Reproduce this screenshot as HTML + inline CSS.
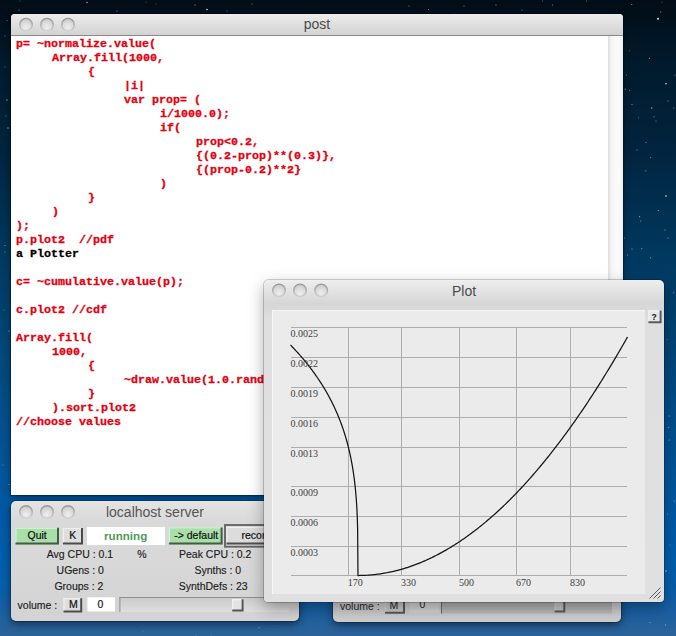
<!DOCTYPE html>
<html><head><meta charset="utf-8">
<style>
*{margin:0;padding:0;box-sizing:border-box}
html,body{width:676px;height:636px;overflow:hidden}
body{position:relative;font-family:"Liberation Sans",sans-serif;
background:linear-gradient(180deg,#020c16 0%,#011a2c 10%,#02243f 24%,#00385e 40%,#034577 54%,#03559a 75%,#0058a4 80%,#005ead 88%,#0a5eaa 93%,#2e6298 100%);}
.w{position:absolute;overflow:hidden}
.w svg{position:absolute}
svg text{white-space:pre}
</style></head><body>
<svg width="0" height="0" style="position:absolute">
 <defs>
  <radialGradient id="tlg" cx="50%" cy="72%" r="62%">
   <stop offset="0" stop-color="#eeeeee"/><stop offset="0.6" stop-color="#dddddd"/><stop offset="1" stop-color="#cbcbcb"/>
  </radialGradient>
  <linearGradient id="tls" x1="0" y1="0" x2="0" y2="1">
   <stop offset="0" stop-color="#999"/><stop offset="0.45" stop-color="#adadad"/><stop offset="1" stop-color="#d2d2d2"/>
  </linearGradient>
  <linearGradient id="tbar" x1="0" y1="0" x2="0" y2="1">
   <stop offset="0" stop-color="#ececec"/><stop offset="1" stop-color="#d3d3d3"/>
  </linearGradient>
 </defs>
</svg>
<svg style="position:absolute;left:0;top:0" width="676" height="636"><circle cx="20" cy="1" r="0.5" fill="#d8e8f8" opacity="0.5"/><circle cx="19" cy="10" r="0.6" fill="#d8e8f8" opacity="0.7"/><circle cx="87" cy="2.5" r="0.7" fill="#d8e8f8" opacity="0.8"/><circle cx="117" cy="11" r="0.6" fill="#d8e8f8" opacity="0.6"/><circle cx="146" cy="2" r="0.5" fill="#d8e8f8" opacity="0.4"/><circle cx="156" cy="4" r="0.5" fill="#d8e8f8" opacity="0.4"/><circle cx="195" cy="5" r="0.6" fill="#d8e8f8" opacity="0.7"/><circle cx="207" cy="9.5" r="0.8" fill="#d8e8f8" opacity="1"/><circle cx="227" cy="11" r="0.5" fill="#d8e8f8" opacity="0.6"/><circle cx="252" cy="4" r="0.6" fill="#d8e8f8" opacity="0.6"/><circle cx="409" cy="6" r="0.6" fill="#d8e8f8" opacity="0.6"/><circle cx="428.5" cy="9.5" r="0.6" fill="#d8e8f8" opacity="0.6"/><circle cx="464" cy="6" r="0.6" fill="#d8e8f8" opacity="0.6"/><circle cx="496" cy="5" r="0.6" fill="#d8e8f8" opacity="0.7"/><circle cx="454" cy="14" r="0.5" fill="#d8e8f8" opacity="0.5"/><circle cx="522" cy="10" r="0.6" fill="#d8e8f8" opacity="0.6"/><circle cx="542.5" cy="1" r="0.5" fill="#d8e8f8" opacity="0.5"/><circle cx="552.5" cy="5" r="0.6" fill="#d8e8f8" opacity="0.6"/><circle cx="586.5" cy="1" r="0.5" fill="#d8e8f8" opacity="0.5"/><circle cx="631.8" cy="4.5" r="0.6" fill="#d8e8f8" opacity="0.6"/><circle cx="662" cy="2" r="0.5" fill="#d8e8f8" opacity="0.5"/><circle cx="660.7" cy="12" r="0.6" fill="#d8e8f8" opacity="0.7"/><circle cx="658" cy="18.7" r="1" fill="#d8e8f8" opacity="1"/><circle cx="649.5" cy="58.4" r="0.6" fill="#d8e8f8" opacity="0.5"/><circle cx="629.7" cy="50.7" r="0.5" fill="#d8e8f8" opacity="0.4"/><circle cx="626.4" cy="75" r="0.6" fill="#d8e8f8" opacity="0.5"/><circle cx="674.9" cy="75" r="0.6" fill="#d8e8f8" opacity="0.5"/><circle cx="666" cy="83.7" r="0.8" fill="#d8e8f8" opacity="0.9"/><circle cx="625.3" cy="89.2" r="0.6" fill="#d8e8f8" opacity="0.6"/><circle cx="629.7" cy="90.3" r="0.6" fill="#d8e8f8" opacity="0.5"/><circle cx="632" cy="104.6" r="0.6" fill="#d8e8f8" opacity="0.6"/><circle cx="651.7" cy="108" r="0.7" fill="#d8e8f8" opacity="0.7"/><circle cx="668" cy="101" r="0.6" fill="#d8e8f8" opacity="0.6"/><circle cx="673.8" cy="108" r="0.6" fill="#d8e8f8" opacity="0.6"/><circle cx="654" cy="116.7" r="0.6" fill="#d8e8f8" opacity="0.5"/><circle cx="656" cy="121" r="0.6" fill="#d8e8f8" opacity="0.6"/><circle cx="638.5" cy="117.8" r="0.5" fill="#d8e8f8" opacity="0.5"/><circle cx="646" cy="142.6" r="0.6" fill="#d8e8f8" opacity="0.6"/><circle cx="637" cy="150" r="0.6" fill="#d8e8f8" opacity="0.6"/><circle cx="650.6" cy="157.6" r="0.6" fill="#d8e8f8" opacity="0.5"/><circle cx="645.8" cy="170.8" r="0.6" fill="#d8e8f8" opacity="0.5"/><circle cx="666" cy="196" r="0.8" fill="#d8e8f8" opacity="1"/><circle cx="658.3" cy="210.5" r="0.6" fill="#d8e8f8" opacity="0.7"/><circle cx="639.6" cy="216.7" r="0.6" fill="#d8e8f8" opacity="0.6"/><circle cx="640.7" cy="221" r="0.6" fill="#d8e8f8" opacity="0.6"/><circle cx="665" cy="230" r="0.6" fill="#d8e8f8" opacity="0.7"/><circle cx="668" cy="238" r="0.6" fill="#d8e8f8" opacity="0.6"/><circle cx="624.6" cy="238" r="0.5" fill="#d8e8f8" opacity="0.5"/><circle cx="632" cy="249" r="0.6" fill="#d8e8f8" opacity="0.7"/><circle cx="641.8" cy="248.6" r="0.6" fill="#d8e8f8" opacity="0.6"/><circle cx="627.5" cy="255" r="0.6" fill="#d8e8f8" opacity="0.6"/><circle cx="650.6" cy="257.8" r="0.6" fill="#d8e8f8" opacity="0.6"/><circle cx="673.6" cy="292.7" r="0.6" fill="#d8e8f8" opacity="0.5"/><circle cx="667.3" cy="339.5" r="0.5" fill="#d8e8f8" opacity="0.4"/><circle cx="669.3" cy="416" r="0.6" fill="#d8e8f8" opacity="0.7"/><circle cx="668.7" cy="427.3" r="0.6" fill="#d8e8f8" opacity="0.6"/><circle cx="669.3" cy="440" r="0.6" fill="#d8e8f8" opacity="0.6"/><circle cx="674.4" cy="501" r="0.6" fill="#d8e8f8" opacity="0.6"/><circle cx="667.3" cy="514" r="0.5" fill="#d8e8f8" opacity="0.5"/><circle cx="670" cy="545" r="0.5" fill="#d8e8f8" opacity="0.5"/><circle cx="666" cy="571" r="0.8" fill="#d8e8f8" opacity="0.8"/><circle cx="7" cy="20.6" r="0.6" fill="#d8e8f8" opacity="0.5"/><circle cx="5" cy="36" r="0.6" fill="#d8e8f8" opacity="0.5"/><circle cx="5" cy="67" r="0.6" fill="#d8e8f8" opacity="0.5"/><circle cx="7" cy="100" r="0.7" fill="#d8e8f8" opacity="0.7"/><circle cx="6" cy="116" r="0.6" fill="#d8e8f8" opacity="0.5"/><circle cx="8" cy="128" r="0.7" fill="#d8e8f8" opacity="0.7"/><circle cx="5" cy="245.5" r="0.6" fill="#d8e8f8" opacity="0.6"/><circle cx="5" cy="252" r="0.6" fill="#d8e8f8" opacity="0.5"/><circle cx="4" cy="310" r="0.5" fill="#d8e8f8" opacity="0.4"/><circle cx="9" cy="331" r="0.6" fill="#d8e8f8" opacity="0.8"/><circle cx="3" cy="465" r="0.6" fill="#d8e8f8" opacity="0.5"/><circle cx="9" cy="484.5" r="0.6" fill="#d8e8f8" opacity="0.6"/><circle cx="143" cy="631" r="0.5" fill="#d8e8f8" opacity="0.4"/><circle cx="196" cy="635" r="0.5" fill="#d8e8f8" opacity="0.4"/><circle cx="211" cy="635" r="0.5" fill="#d8e8f8" opacity="0.4"/><circle cx="259" cy="627.7" r="0.6" fill="#d8e8f8" opacity="0.5"/><circle cx="650" cy="622.6" r="0.6" fill="#d8e8f8" opacity="0.6"/><circle cx="665.5" cy="625" r="0.6" fill="#d8e8f8" opacity="0.6"/></svg>

<!-- POST WINDOW -->
<div class="w" style="left:11px;top:14px;width:612px;height:481px;border-radius:4px 4px 0 0;background:#fff;box-shadow:0 0 0 1px rgba(0,0,0,0.25),0 2px 7px rgba(0,0,0,0.45);overflow:visible"><div style="position:absolute;inset:0;overflow:hidden;border-radius:4px 4px 0 0">
 <svg style="left:-11px;top:-14px" width="676" height="636">
  <rect x="11" y="14" width="612" height="21" fill="url(#tbar)"/>
  <rect x="11" y="35" width="612" height="1" fill="#8a8a8a"/>
  <circle cx="26.0" cy="24.7" r="6.3" fill="url(#tlg)" stroke="url(#tls)" stroke-width="1.4"/><circle cx="47.0" cy="24.7" r="6.3" fill="url(#tlg)" stroke="url(#tls)" stroke-width="1.4"/><circle cx="68.0" cy="24.7" r="6.3" fill="url(#tlg)" stroke="url(#tls)" stroke-width="1.4"/>
  <text x="317" y="29" font-family="Liberation Sans" font-size="14" fill="#4b4b4b" text-anchor="middle">post</text>
  <rect x="608" y="36" width="15" height="459" fill="url(#sbar)"/>
  <defs><linearGradient id="sbar" x1="0" y1="0" x2="1" y2="0"><stop offset="0" stop-color="#dedede"/><stop offset="0.25" stop-color="#f6f6f6"/><stop offset="0.7" stop-color="#fbfbfb"/><stop offset="1" stop-color="#efefef"/></linearGradient></defs>
  <g font-family="Liberation Mono" font-weight="bold" font-size="11.67" stroke-width="0.3">
<text x="16" y="47" fill="#e4000e" stroke="#e4000e">p= ~normalize.value(</text>
<text x="52" y="61" fill="#e4000e" stroke="#e4000e">Array.fill(1000,</text>
<text x="88" y="75" fill="#e4000e" stroke="#e4000e">{</text>
<text x="124" y="89" fill="#e4000e" stroke="#e4000e">|i|</text>
<text x="124" y="103" fill="#e4000e" stroke="#e4000e">var prop= (</text>
<text x="160" y="117" fill="#e4000e" stroke="#e4000e">i/1000.0);</text>
<text x="160" y="131" fill="#e4000e" stroke="#e4000e">if(</text>
<text x="196" y="145" fill="#e4000e" stroke="#e4000e">prop&lt;0.2,</text>
<text x="196" y="159" fill="#e4000e" stroke="#e4000e">{(0.2-prop)**(0.3)},</text>
<text x="196" y="173" fill="#e4000e" stroke="#e4000e">{(prop-0.2)**2}</text>
<text x="160" y="187" fill="#e4000e" stroke="#e4000e">)</text>
<text x="88" y="201" fill="#e4000e" stroke="#e4000e">}</text>
<text x="52" y="215" fill="#e4000e" stroke="#e4000e">)</text>
<text x="16" y="229" fill="#e4000e" stroke="#e4000e">);</text>
<text x="16" y="243" fill="#e4000e" stroke="#e4000e">p.plot2  //pdf</text>
<text x="16" y="257" fill="#000" stroke="#000">a Plotter</text>
<text x="16" y="285" fill="#e4000e" stroke="#e4000e">c= ~cumulative.value(p);</text>
<text x="16" y="313" fill="#e4000e" stroke="#e4000e">c.plot2 //cdf</text>
<text x="16" y="341" fill="#e4000e" stroke="#e4000e">Array.fill(</text>
<text x="52" y="355" fill="#e4000e" stroke="#e4000e">1000,</text>
<text x="88" y="369" fill="#e4000e" stroke="#e4000e">{</text>
<text x="124" y="383" fill="#e4000e" stroke="#e4000e">~draw.value(1.0.rand</text>
<text x="88" y="397" fill="#e4000e" stroke="#e4000e">}</text>
<text x="52" y="411" fill="#e4000e" stroke="#e4000e">).sort.plot2</text>
<text x="16" y="425" fill="#e4000e" stroke="#e4000e">//choose values</text>
  </g>
 </svg>
</div></div>

<!-- INTERNAL SERVER WINDOW -->
<div class="w" style="left:333px;top:500px;width:288px;height:121.5px;border-radius:0 0 5px 5px;background:linear-gradient(#d4d4d4,#cdcdcd);box-shadow:0 0 0 1px rgba(0,0,0,0.2),0 3px 9px rgba(0,0,0,0.5)">
 <svg style="left:-333px;top:-500px" width="676" height="636">
  <g font-family="Liberation Sans" font-size="10.5" fill="#262626">
   <text x="340" y="610">volume :</text>
  </g>
  <rect x="385" y="598" width="20" height="15.7" fill="#cbcbcb"/><path d="M385,598.5H405M385.5,598V613.7" stroke="#dadada" stroke-width="1"/><path d="M385,612.7H404V598" stroke="#5a5a5a" stroke-width="2" fill="none"/>
  <text x="389.6" y="608.5" font-family="Liberation Sans" font-size="10.5" fill="#1a1a1a">M</text>
  <rect x="409.6" y="598" width="29.6" height="14.6" fill="#d6d6d6"/>
  <text x="419.5" y="608" font-family="Liberation Sans" font-size="10.5" fill="#262626">0</text>
  <rect x="441" y="598" width="171" height="15.6" fill="url(#trk2)"/>
  <defs><linearGradient id="trk2" x1="0" y1="0" x2="0" y2="1"><stop offset="0" stop-color="#a9a9a9"/><stop offset="1" stop-color="#bebebe"/></linearGradient></defs>
  <rect x="441" y="598" width="1" height="15.6" fill="#6f6f6f"/>
  <rect x="554.6" y="599" width="10.7" height="13.6" fill="#c6c6c6"/><path d="M554.6,599.5H565.3M555.1,599V612.6" stroke="#d2d2d2" stroke-width="1"/><path d="M554.6,611.6H564.3V599" stroke="#5a5a5a" stroke-width="2" fill="none"/>
 </svg>
</div>

<!-- LOCALHOST SERVER WINDOW -->
<div class="w" style="left:11px;top:501px;width:288px;height:119.6px;border-radius:5px;background:linear-gradient(#e4e4e4,#d9d9d9 21px,#d8d8d8 60px,#d3d3d3);box-shadow:0 0 0 1px rgba(0,0,0,0.2),0 3px 9px rgba(0,0,0,0.5)">
 <svg style="left:-11px;top:-501px" width="676" height="636">
  <circle cx="26.0" cy="512.0" r="6.3" fill="url(#tlg)" stroke="url(#tls)" stroke-width="1.4"/><circle cx="47.0" cy="512.0" r="6.3" fill="url(#tlg)" stroke="url(#tls)" stroke-width="1.4"/><circle cx="68.0" cy="512.0" r="6.3" fill="url(#tlg)" stroke="url(#tls)" stroke-width="1.4"/>
  <text x="155" y="517" font-family="Liberation Sans" font-size="14" fill="#555" text-anchor="middle">localhost server</text>
  <rect x="15.5" y="527.8" width="43.5" height="16.8" fill="#a9dfa9"/><path d="M15.5,528.3H59M16,527.8V544.6" stroke="#d6f4d6" stroke-width="1"/><path d="M15.5,543.6H58V527.8" stroke="#435c43" stroke-width="2" fill="none"/>
  <rect x="63" y="528" width="20" height="16.6" fill="#dedede"/><path d="M63,528.5H83M63.5,528V544.6" stroke="#f2f2f2" stroke-width="1"/><path d="M63,543.6H82V528" stroke="#4a4a4a" stroke-width="2" fill="none"/>
  <rect x="87" y="527" width="78" height="18" fill="#fff"/>
  <rect x="169" y="527.4" width="53.6" height="17" fill="#a9dfa9"/><path d="M169,527.9H222.6M169.5,527.4V544.4" stroke="#d6f4d6" stroke-width="1"/><path d="M169,543.4H221.6V527.4" stroke="#435c43" stroke-width="2" fill="none"/>
  <rect x="225" y="525" width="60" height="21.7" fill="none" stroke="#666" stroke-width="1.9"/>
  <rect x="226.5" y="527" width="58.5" height="17.4" fill="#dcdcdc"/><path d="M226.5,527.5H285M227,527V544.4" stroke="#f0f0f0" stroke-width="1"/><path d="M226.5,543.4H284V527" stroke="#4f4f4f" stroke-width="2" fill="none"/>
  <g font-family="Liberation Sans" font-size="10.5" fill="#111" stroke="#111" stroke-width="0.2">
   <text x="27.5" y="538.6">Quit</text>
   <text x="69.2" y="538.6">K</text>
   <text x="174.2" y="539">-&gt; default</text>
   <text x="241.5" y="538.8">record</text>
  </g>
  <text x="125.7" y="540.2" font-family="Liberation Sans" font-weight="bold" font-size="11.6" fill="#4e9a58" text-anchor="middle">running</text>
  <g font-family="Liberation Sans" font-size="10.5" fill="#1c1c1c" stroke="#1c1c1c" stroke-width="0.15">
   <text x="46.8" y="558">Avg CPU : 0.1</text>
   <text x="137.3" y="558">%</text>
   <text x="56.6" y="574">UGens : 0</text>
   <text x="54.4" y="590">Groups : 2</text>
   <text x="179" y="558">Peak CPU : 0.2</text>
   <text x="194.4" y="574">Synths : 0</text>
   <text x="178.7" y="590">SynthDefs : 23</text>
   <text x="17.6" y="609">volume :</text>
  </g>
  <rect x="63.5" y="598.2" width="18.7" height="14.2" fill="#dedede"/><path d="M63.5,598.7H82.2M64,598.2V612.4" stroke="#f2f2f2" stroke-width="1"/><path d="M63.5,611.4H81.2V598.2" stroke="#4a4a4a" stroke-width="2" fill="none"/>
  <text x="69" y="608.2" font-family="Liberation Sans" font-size="10.5" fill="#111" stroke="#111" stroke-width="0.2">M</text>
  <rect x="87.4" y="597.3" width="27.6" height="14.2" fill="#fff"/>
  <text x="97.6" y="607.8" font-family="Liberation Sans" font-size="10.5" fill="#111" stroke="#111" stroke-width="0.2">0</text>
  <rect x="119.4" y="597" width="169.5" height="15" fill="url(#trk)"/>
  <defs><linearGradient id="trk" x1="0" y1="0" x2="0" y2="1"><stop offset="0" stop-color="#cacaca"/><stop offset="1" stop-color="#dedede"/></linearGradient></defs>
  <rect x="119.4" y="597" width="169.5" height="1" fill="#8f8f8f"/>
  <rect x="119.4" y="597" width="1" height="15" fill="#8f8f8f"/>
  <rect x="232.2" y="599.2" width="11.4" height="12.2" fill="#e4e4e4"/><path d="M232.2,599.7H243.6M232.7,599.2V611.4" stroke="#f6f6f6" stroke-width="1"/><path d="M232.2,610.4H242.6V599.2" stroke="#555" stroke-width="2" fill="none"/>
 </svg>
</div>

<!-- PLOT WINDOW -->
<div class="w" style="left:264px;top:280px;width:400px;height:322px;border-radius:5px 5px 4px 4px;background:linear-gradient(#f0f0f0,#ececec 2px,#d6d6d6 24px,#d9d9d9 29px,#dfdfdf 40px,#e0e0e0);box-shadow:0 0 0 1px rgba(0,0,0,0.18),0 6px 16px rgba(0,0,0,0.34)">
 <svg style="left:-264px;top:-280px" width="676" height="636">
  <circle cx="279.0" cy="290.4" r="6.3" fill="url(#tlg)" stroke="url(#tls)" stroke-width="1.4"/><circle cx="300.0" cy="290.4" r="6.3" fill="url(#tlg)" stroke="url(#tls)" stroke-width="1.4"/><circle cx="321.2" cy="290.4" r="6.3" fill="url(#tlg)" stroke="url(#tls)" stroke-width="1.4"/>
  <text x="464" y="296" font-family="Liberation Sans" font-size="14" fill="#4b4b4b" text-anchor="middle">Plot</text>
  <rect x="272" y="310" width="373" height="284" fill="#ebebeb"/><rect x="272" y="310" width="1" height="284" fill="#f6f6f6"/><rect x="272" y="310" width="373" height="1" fill="#f3f3f3"/>
  <rect x="648.4" y="310.4" width="13.2" height="12.9" fill="#e6e6e6"/><path d="M648.4,310.9H661.6M648.9,310.4V323.3" stroke="#f6f6f6" stroke-width="1"/><path d="M648.4,322.3H660.6V310.4" stroke="#5a5a5a" stroke-width="2" fill="none"/>
  <text x="651.6" y="320" font-family="Liberation Sans" font-weight="bold" font-size="8.5" fill="#111">?</text>
  <g stroke="#adadad" stroke-width="1" fill="none" shape-rendering="crispEdges">
   <path d="M290.5,327.5H627M290.5,357.5H627M290.5,387.5H627M290.5,417.5H627M290.5,447.5H627M290.5,486.5H627M290.5,516.5H627M290.5,546.5H627M290.5,575.5H627"/>
   <path d="M348.5,327V576M401.5,327V576M459.5,327V576M516.5,327V576M570.5,327V576"/>
  </g>
  <polyline points="290.50,345.00 290.84,345.34 291.17,345.69 291.51,346.04 291.85,346.39 292.19,346.74 292.52,347.09 292.86,347.45 293.20,347.80 293.54,348.16 293.87,348.52 294.21,348.87 294.55,349.23 294.89,349.60 295.22,349.96 295.56,350.32 295.90,350.69 296.23,351.06 296.57,351.43 296.91,351.80 297.25,352.17 297.58,352.54 297.92,352.91 298.26,353.29 298.60,353.67 298.93,354.05 299.27,354.43 299.61,354.81 299.95,355.19 300.28,355.58 300.62,355.96 300.96,356.35 301.29,356.74 301.63,357.13 301.97,357.53 302.31,357.92 302.64,358.32 302.98,358.72 303.32,359.12 303.66,359.52 303.99,359.92 304.33,360.33 304.67,360.73 305.01,361.14 305.34,361.55 305.68,361.96 306.02,362.38 306.35,362.79 306.69,363.21 307.03,363.63 307.37,364.05 307.70,364.48 308.04,364.90 308.38,365.33 308.72,365.76 309.05,366.19 309.39,366.63 309.73,367.06 310.07,367.50 310.40,367.94 310.74,368.39 311.08,368.83 311.41,369.28 311.75,369.73 312.09,370.18 312.43,370.63 312.76,371.09 313.10,371.55 313.44,372.01 313.78,372.47 314.11,372.94 314.45,373.41 314.79,373.88 315.13,374.35 315.46,374.83 315.80,375.31 316.14,375.79 316.47,376.28 316.81,376.76 317.15,377.25 317.49,377.75 317.82,378.24 318.16,378.74 318.50,379.24 318.84,379.75 319.17,380.25 319.51,380.77 319.85,381.28 320.19,381.80 320.52,382.32 320.86,382.84 321.20,383.37 321.54,383.90 321.87,384.43 322.21,384.97 322.55,385.51 322.88,386.06 323.22,386.60 323.56,387.16 323.90,387.71 324.23,388.27 324.57,388.84 324.91,389.40 325.25,389.98 325.58,390.55 325.92,391.13 326.26,391.72 326.60,392.30 326.93,392.90 327.27,393.50 327.61,394.10 327.94,394.70 328.28,395.32 328.62,395.93 328.96,396.55 329.29,397.18 329.63,397.81 329.97,398.45 330.31,399.09 330.64,399.74 330.98,400.40 331.32,401.05 331.66,401.72 331.99,402.39 332.33,403.07 332.67,403.75 333.00,404.44 333.34,405.14 333.68,405.84 334.02,406.55 334.35,407.27 334.69,408.00 335.03,408.73 335.37,409.47 335.70,410.21 336.04,410.97 336.38,411.73 336.72,412.51 337.05,413.29 337.39,414.08 337.73,414.87 338.06,415.68 338.40,416.50 338.74,417.33 339.08,418.16 339.41,419.01 339.75,419.87 340.09,420.74 340.43,421.62 340.76,422.52 341.10,423.42 341.44,424.34 341.78,425.27 342.11,426.22 342.45,427.18 342.79,428.16 343.12,429.15 343.46,430.15 343.80,431.17 344.14,432.21 344.47,433.27 344.81,434.35 345.15,435.44 345.49,436.56 345.82,437.70 346.16,438.86 346.50,440.04 346.84,441.25 347.17,442.48 347.51,443.74 347.85,445.03 348.18,446.35 348.52,447.70 348.86,449.09 349.20,450.51 349.53,451.98 349.87,453.48 350.21,455.03 350.55,456.62 350.88,458.27 351.22,459.97 351.56,461.74 351.90,463.57 352.23,465.47 352.57,467.45 352.91,469.53 353.24,471.70 353.58,473.98 353.92,476.39 354.26,478.94 354.59,481.66 354.93,484.58 355.27,487.74 355.61,491.19 355.94,495.00 356.28,499.28 356.62,504.22 356.96,510.11 357.29,517.60 357.63,528.47 357.97,575.50 358.64,575.50 359.99,575.49 361.34,575.46 362.69,575.43 364.04,575.38 365.39,575.32 366.74,575.25 368.09,575.16 369.44,575.07 370.79,574.96 372.14,574.84 373.48,574.71 374.83,574.57 376.18,574.41 377.53,574.24 378.88,574.06 380.23,573.87 381.58,573.67 382.93,573.45 384.28,573.23 385.63,572.99 386.98,572.74 388.33,572.47 389.68,572.20 391.03,571.91 392.38,571.61 393.73,571.30 395.07,570.98 396.42,570.65 397.77,570.30 399.12,569.94 400.47,569.57 401.82,569.19 403.17,568.79 404.52,568.39 405.87,567.97 407.22,567.54 408.57,567.09 409.92,566.64 411.27,566.17 412.62,565.70 413.97,565.21 415.31,564.70 416.66,564.19 418.01,563.66 419.36,563.13 420.71,562.58 422.06,562.01 423.41,561.44 424.76,560.85 426.11,560.26 427.46,559.65 428.81,559.03 430.16,558.39 431.51,557.75 432.86,557.09 434.21,556.42 435.56,555.74 436.90,555.04 438.25,554.34 439.60,553.62 440.95,552.89 442.30,552.15 443.65,551.40 445.00,550.63 446.35,549.86 447.70,549.07 449.05,548.27 450.40,547.45 451.75,546.63 453.10,545.79 454.45,544.94 455.80,544.08 457.14,543.21 458.49,542.33 459.84,541.43 461.19,540.52 462.54,539.60 463.89,538.67 465.24,537.72 466.59,536.77 467.94,535.80 469.29,534.82 470.64,533.83 471.99,532.82 473.34,531.81 474.69,530.78 476.04,529.74 477.38,528.69 478.73,527.62 480.08,526.55 481.43,525.46 482.78,524.36 484.13,523.25 485.48,522.12 486.83,520.99 488.18,519.84 489.53,518.68 490.88,517.51 492.23,516.33 493.58,515.13 494.93,513.92 496.28,512.70 497.63,511.47 498.97,510.23 500.32,508.97 501.67,507.71 503.02,506.43 504.37,505.14 505.72,503.83 507.07,502.52 508.42,501.19 509.77,499.85 511.12,498.50 512.47,497.14 513.82,495.76 515.17,494.38 516.52,492.98 517.87,491.57 519.21,490.15 520.56,488.71 521.91,487.26 523.26,485.81 524.61,484.34 525.96,482.85 527.31,481.36 528.66,479.85 530.01,478.33 531.36,476.80 532.71,475.26 534.06,473.71 535.41,472.14 536.76,470.56 538.11,468.97 539.45,467.37 540.80,465.76 542.15,464.13 543.50,462.50 544.85,460.85 546.20,459.18 547.55,457.51 548.90,455.82 550.25,454.13 551.60,452.42 552.95,450.70 554.30,448.96 555.65,447.22 557.00,445.46 558.35,443.69 559.70,441.91 561.04,440.12 562.39,438.31 563.74,436.49 565.09,434.67 566.44,432.83 567.79,430.97 569.14,429.11 570.49,427.23 571.84,425.34 573.19,423.44 574.54,421.53 575.89,419.60 577.24,417.67 578.59,415.72 579.94,413.76 581.28,411.79 582.63,409.80 583.98,407.80 585.33,405.80 586.68,403.78 588.03,401.74 589.38,399.70 590.73,397.64 592.08,395.58 593.43,393.50 594.78,391.40 596.13,389.30 597.48,387.18 598.83,385.06 600.18,382.92 601.53,380.76 602.87,378.60 604.22,376.43 605.57,374.24 606.92,372.04 608.27,369.83 609.62,367.60 610.97,365.37 612.32,363.12 613.67,360.86 615.02,358.59 616.37,356.31 617.72,354.01 619.07,351.70 620.42,349.38 621.77,347.05 623.11,344.71 624.46,342.36 625.81,339.99 627.16,337.61 627.50,337.01" fill="none" stroke="#151515" stroke-width="1.25" stroke-linejoin="round"/>
  <g font-family="Liberation Serif" font-size="10" fill="#404040">
   <text x="290.5" y="336.5">0.0025</text>
   <text x="290.5" y="366.5">0.0022</text>
   <text x="290.5" y="396.5">0.0019</text>
   <text x="290.5" y="426.5">0.0016</text>
   <text x="290.5" y="456.5">0.0013</text>
   <text x="290.5" y="495.5">0.0009</text>
   <text x="290.5" y="525.5">0.0006</text>
   <text x="290.5" y="555.5">0.0003</text>
   <text x="347.8" y="585.5">170</text>
   <text x="401" y="585.5">330</text>
   <text x="459" y="585.5">500</text>
   <text x="516" y="585.5">670</text>
   <text x="570" y="585.5">830</text>
  </g>
  <g stroke="#5a5a5a" stroke-width="1">
   <path d="M649.5,598.5L660.5,587.5M653.5,598.5L660.5,591.5M657.5,598.5L660.5,595.5"/>
  </g>
 </svg>
</div>
</body></html>
